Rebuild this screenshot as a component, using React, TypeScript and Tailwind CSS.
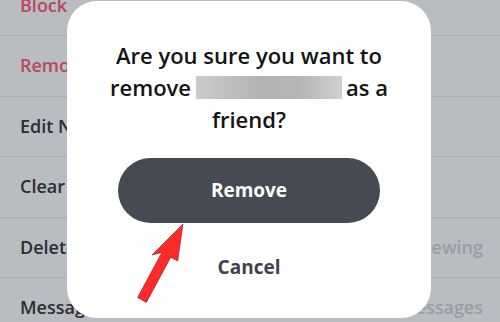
export default function App() {
  const rows: { left: string; right?: string; red?: boolean }[] = [
    { left: "Block", red: true },
    { left: "Remove Friend", red: true },
    { left: "Edit Name" },
    { left: "Clear Conversation" },
    { left: "Delete Chats", right: "After Viewing" },
    { left: "Message Notifications", right: "All Messages" },
  ];
  return (
    <div
      className="relative w-[500px] h-[322px] overflow-hidden bg-[#b9bcc1]"
      style={{ fontFamily: "'Open Sans', Lato, sans-serif" }}
    >
      <div className="-mt-[24.5px] flex flex-col">
        {rows.map((r, i) => (
          <div
            key={i}
            className="h-[60.5px] flex items-center justify-between pl-[20px] pr-[17px] border-b border-[#a9acb1]"
          >
            <span
              className={`text-[18px] font-semibold ${r.red ? "text-[#b8485d]" : "text-[#2a2d32]"}`}
            >
              {r.left}
            </span>
            {r.right && (
              <span className="text-[18px] font-semibold text-[#9a9da3]">{r.right}</span>
            )}
          </div>
        ))}
      </div>

      <div className="absolute left-[67px] top-[1px] w-[364px] h-[317px] bg-white rounded-[30px] flex flex-col items-center">
        <div className="mt-[38px] w-[330px] text-center text-[22px] leading-[32px] font-semibold text-[#141414]">
          <div>Are you sure you want to</div>
          <div className="flex items-center justify-center">
            <span>remove</span>
            <span className="inline-block ml-[5px] mr-[4px] w-[146px] h-[23px] bg-[linear-gradient(90deg,#cbcbcb,#b3b3b3_45%,#b5b5b5_70%,#d0d0d0)]" />
            <span>as a</span>
          </div>
          <div>friend?</div>
        </div>
        <button className="mt-[23px] w-[262px] h-[65px] rounded-full bg-[#454a53] text-white text-[19px] font-bold">
          Remove
        </button>
        <div className="mt-[30px] text-[19px] font-bold text-[#3e434b]">Cancel</div>
      </div>

      <svg className="absolute left-0 top-0" width="500" height="322" viewBox="0 0 500 322">
        <polygon
          points="183,224 177.7,261 170.7,257.2 146.4,302.4 137.6,297.6 161.9,252.4 152,255"
          fill="#ff2b2b"
          stroke="#8a1010"
          strokeWidth="0.6"
          strokeLinejoin="miter"
        />
      </svg>
    </div>
  );
}
